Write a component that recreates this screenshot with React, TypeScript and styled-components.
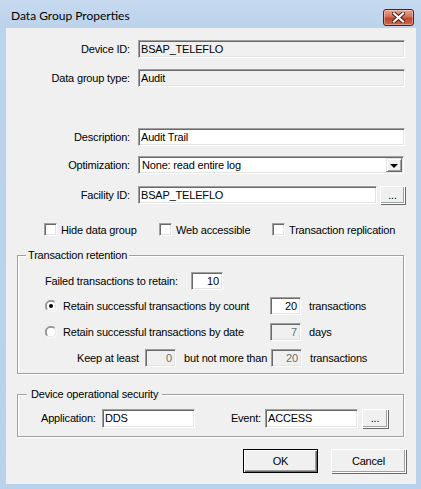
import React from "react";
import styled, { createGlobalStyle } from "styled-components";

const GlobalStyle = createGlobalStyle`
  html, body {
    margin: 0;
    padding: 0;
    background: #b9d1ea;
  }
`;

const UI_FONT = `"Liberation Sans", Arial, sans-serif`;

const Window = styled.div`
  width: 421px;
  height: 489px;
  box-sizing: border-box;
  padding: 0 5px 5px 6px;
  display: flex;
  flex-direction: column;
  background: linear-gradient(180deg, #c6d9ef 0px, #bcd3eb 28px, #b9d1ea 100%);
  font-family: ${UI_FONT};
  font-size: 11px;
  letter-spacing: -0.18px;
  color: #000;
`;

const TitleBar = styled.div`
  height: 28px;
  display: flex;
  align-items: flex-start;
  flex-shrink: 0;
`;

const Title = styled.span`
  margin: 8px 0 0 5px;
  font-family: Lato, "Noto Sans", sans-serif;
  font-size: 12px;
  letter-spacing: 0;
  color: #000;
`;

const CloseButton = styled.div`
  margin: 9px 2px 0 auto;
  width: 31px;
  height: 17px;
  box-sizing: border-box;
  border: 1px solid #5a1e14;
  border-radius: 3px;
  background: linear-gradient(180deg, #e8a393 0%, #d46f57 45%, #c2462a 55%, #d0674a 100%);
  box-shadow: inset 0 0 0 1px rgba(255, 255, 255, 0.35);
  display: flex;
  align-items: center;
  justify-content: center;
`;

const Client = styled.div`
  flex: 1;
  background: #f0f0f0;
  display: flex;
  flex-direction: column;
  padding-top: 12px;
`;

const FormRow = styled.div<{ $top: number }>`
  display: flex;
  align-items: center;
  height: 18px;
  margin-top: ${({ $top }) => $top}px;
`;

const RowLabel = styled.span`
  width: 124px;
  margin-right: 8px;
  text-align: right;
  white-space: nowrap;
`;

const Edit = styled.div<{ $w: number; $h?: number; $ro?: boolean; $dis?: boolean; $right?: boolean }>`
  width: ${({ $w }) => $w}px;
  height: ${({ $h }) => $h ?? 18}px;
  box-sizing: border-box;
  flex-shrink: 0;
  border-style: solid;
  border-width: 1px;
  border-color: #a0a0a0 #ffffff #ffffff #a0a0a0;
  box-shadow: inset 1px 1px 0 #696969, inset -1px -1px 0 #e3e3e3;
  background: ${({ $ro, $dis }) => ($ro || $dis ? "#f0f0f0" : "#ffffff")};
  color: ${({ $dis }) => ($dis ? "#6d6d6d" : "#000")};
  display: flex;
  align-items: center;
  justify-content: ${({ $right }) => ($right ? "flex-end" : "flex-start")};
  padding: 0 3px 0 2px;
  white-space: nowrap;
  overflow: hidden;
`;

const Combo = styled(Edit)`
  padding-right: 0;
  justify-content: space-between;
`;

const ComboText = styled.span`
  padding-left: 1px;
`;

const ComboButton = styled.div`
  width: 16px;
  height: 14px;
  box-sizing: border-box;
  margin-right: 1px;
  background: #f0f0f0;
  border-style: solid;
  border-width: 1px;
  border-color: #e3e3e3 #696969 #696969 #e3e3e3;
  box-shadow: inset 1px 1px 0 #ffffff, inset -1px -1px 0 #a0a0a0;
  display: flex;
  align-items: center;
  justify-content: center;
`;

const Arrow = styled.span`
  width: 0;
  height: 0;
  border-left: 4px solid transparent;
  border-right: 4px solid transparent;
  border-top: 4px solid #000;
  margin-top: 1px;
`;

const PushButton = styled.div<{ $w: number; $h: number; $ml?: number; $default?: boolean }>`
  width: ${({ $w }) => $w}px;
  height: ${({ $h }) => $h}px;
  margin-left: ${({ $ml }) => $ml ?? 0}px;
  box-sizing: border-box;
  flex-shrink: 0;
  background: #f0f0f0;
  border: 1px solid ${({ $default }) => ($default ? "#000" : "#ffffff")};
  box-shadow: ${({ $default }) =>
    $default
      ? "inset 1px 1px 0 #ffffff, inset -1px -1px 0 #696969, inset -2px -2px 0 #a0a0a0"
      : "inset -1px -1px 0 #a0a0a0, 1px 1px 0 #696969"};
  display: flex;
  align-items: center;
  justify-content: center;
  padding-bottom: 1px;
`;

const CheckRow = styled.div`
  display: flex;
  align-items: center;
  height: 13px;
  margin: 19px 0 0 38px;
`;

const CheckItem = styled.label<{ $w?: number }>`
  display: flex;
  align-items: center;
  width: ${({ $w }) => ($w ? `${$w}px` : "auto")};
  flex-shrink: 0;
`;

const CheckBox = styled.span`
  width: 13px;
  height: 13px;
  box-sizing: border-box;
  margin-right: 4px;
  background: #fff;
  border-style: solid;
  border-width: 1px;
  border-color: #a0a0a0 #ffffff #ffffff #a0a0a0;
  box-shadow: inset 1px 1px 0 #696969, inset -1px -1px 0 #e3e3e3;
`;

const Group = styled.div<{ $top: number; $h: number; $pt: number; $pl: number }>`
  position: relative;
  margin: ${({ $top }) => $top}px 0 0 11px;
  width: 387px;
  height: ${({ $h }) => $h}px;
  box-sizing: border-box;
  border: 1px solid #a0a0a0;
  box-shadow: inset 1px 1px 0 #ffffff, 1px 1px 0 #ffffff;
  padding: ${({ $pt }) => $pt}px 0 0 ${({ $pl }) => $pl}px;
  display: flex;
  flex-direction: column;
`;

const Legend = styled.span<{ $left: number; $pad: number }>`
  position: absolute;
  top: -7px;
  left: ${({ $left }) => $left}px;
  padding: 0 ${({ $pad }) => $pad}px;
  background: #f0f0f0;
  line-height: 13px;
  white-space: nowrap;
`;

const GroupRow = styled.div<{ $top?: number; $indent?: number }>`
  display: flex;
  align-items: center;
  height: 18px;
  margin-top: ${({ $top }) => $top ?? 0}px;
  padding-left: ${({ $indent }) => $indent ?? 0}px;
`;

const Text = styled.span<{ $w?: number; $ml?: number; $right?: boolean; $pr?: number }>`
  width: ${({ $w }) => ($w ? `${$w}px` : "auto")};
  margin-left: ${({ $ml }) => $ml ?? 0}px;
  padding-right: ${({ $pr }) => $pr ?? 0}px;
  box-sizing: border-box;
  text-align: ${({ $right }) => ($right ? "right" : "left")};
  flex-shrink: 0;
  white-space: nowrap;
`;

const RadioWrap = styled.span`
  width: 12px;
  height: 12px;
  margin-right: 6px;
  flex-shrink: 0;
  display: flex;
`;

const ButtonBar = styled.div`
  display: flex;
  justify-content: flex-end;
  margin-top: 12px;
  padding-right: 10px;
`;

const Radio = ({ checked }: { checked?: boolean }) => (
  <RadioWrap>
    <svg width="12" height="12" viewBox="0 0 12 12">
      <circle cx="6" cy="6" r="5.5" fill="#fff" />
      <path d="M1.8 10.2 A5.5 5.5 0 0 1 10.2 1.8" stroke="#a0a0a0" strokeWidth="1" fill="none" />
      <path d="M2.5 9.5 A4.5 4.5 0 0 1 9.5 2.5" stroke="#696969" strokeWidth="1" fill="none" />
      <path d="M10.2 1.8 A5.5 5.5 0 0 1 1.8 10.2" stroke="#ffffff" strokeWidth="1" fill="none" />
      <path d="M9.5 2.5 A4.5 4.5 0 0 1 2.5 9.5" stroke="#e3e3e3" strokeWidth="1" fill="none" />
      {checked && <circle cx="6" cy="6" r="2" fill="#000" />}
    </svg>
  </RadioWrap>
);

const CloseGlyph = () => (
  <svg width="13" height="11" viewBox="0 0 13 11">
    <path d="M2 1.5 L11 9.5 M11 1.5 L2 9.5" stroke="#4a1a10" strokeWidth="4" strokeLinecap="square" />
    <path d="M2 1.5 L11 9.5 M11 1.5 L2 9.5" stroke="#ffffff" strokeWidth="2.2" strokeLinecap="square" />
  </svg>
);

export default function App() {
  return (
    <>
      <GlobalStyle />
      <Window>
        <TitleBar>
          <Title>Data Group Properties</Title>
          <CloseButton>
            <CloseGlyph />
          </CloseButton>
        </TitleBar>
        <Client>
          <FormRow $top={0}>
            <RowLabel>Device ID:</RowLabel>
            <Edit $w={267} $ro>BSAP_TELEFLO</Edit>
          </FormRow>
          <FormRow $top={11}>
            <RowLabel>Data group type:</RowLabel>
            <Edit $w={267} $ro>Audit</Edit>
          </FormRow>
          <FormRow $top={41}>
            <RowLabel>Description:</RowLabel>
            <Edit $w={267}>Audit Trail</Edit>
          </FormRow>
          <FormRow $top={10}>
            <RowLabel>Optimization:</RowLabel>
            <Combo $w={266}>
              <ComboText>None: read entire log</ComboText>
              <ComboButton>
                <Arrow />
              </ComboButton>
            </Combo>
          </FormRow>
          <FormRow $top={12}>
            <RowLabel>Facility ID:</RowLabel>
            <Edit $w={239}>BSAP_TELEFLO</Edit>
            <PushButton $w={25} $h={18} $ml={3}>...</PushButton>
          </FormRow>
          <CheckRow>
            <CheckItem $w={115}>
              <CheckBox />
              Hide data group
            </CheckItem>
            <CheckItem $w={113}>
              <CheckBox />
              Web accessible
            </CheckItem>
            <CheckItem>
              <CheckBox />
              Transaction replication
            </CheckItem>
          </CheckRow>

          <Group $top={19} $h={119} $pt={16} $pl={27}>
            <Legend $left={8} $pad={2}>Transaction retention</Legend>
            <GroupRow>
              <Text $w={146}>Failed transactions to retain:</Text>
              <Edit $w={32} $right>10</Edit>
            </GroupRow>
            <GroupRow $top={7}>
              <Radio checked />
              <Text $w={207}>Retain successful transactions by count</Text>
              <Edit $w={31} $right>20</Edit>
              <Text $ml={8}>transactions</Text>
            </GroupRow>
            <GroupRow $top={8}>
              <Radio />
              <Text $w={207}>Retain successful transactions by date</Text>
              <Edit $w={31} $right $dis>7</Edit>
              <Text $ml={8}>days</Text>
            </GroupRow>
            <GroupRow $top={8} $indent={32}>
              <Text $w={68}>Keep at least</Text>
              <Edit $w={31} $right $dis>0</Edit>
              <Text $w={87} $ml={8}>but not more than</Text>
              <Edit $w={31} $right $dis>20</Edit>
              <Text $ml={8}>transactions</Text>
            </GroupRow>
          </Group>

          <Group $top={20} $h={43} $pt={14} $pl={23}>
            <Legend $left={9} $pad={4}>Device operational security</Legend>
            <GroupRow>
              <Text $w={61}>Application:</Text>
              <Edit $w={93} $h={19}>DDS</Edit>
              <Text $w={70} $right $pr={4}>Event:</Text>
              <Edit $w={93} $h={19}>ACCESS</Edit>
              <PushButton $w={26} $h={19} $ml={4}>...</PushButton>
            </GroupRow>
          </Group>

          <ButtonBar>
            <PushButton $w={75} $h={24} $default>OK</PushButton>
            <PushButton $w={75} $h={24} $ml={13}>Cancel</PushButton>
          </ButtonBar>
        </Client>
      </Window>
    </>
  );
}
